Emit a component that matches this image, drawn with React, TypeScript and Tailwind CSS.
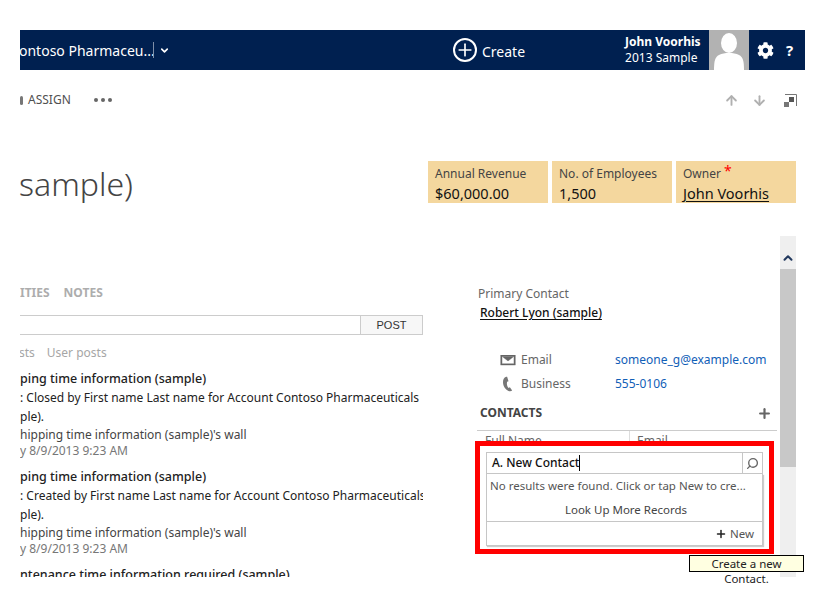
import { ArrowDown, ArrowUp, ChevronDown, ChevronUp, Plus, Search } from "lucide-react";
import { FaCog } from "react-icons/fa";

function Tile({ label, value, link, required }: { label: string; value: string; link?: boolean; required?: boolean }) {
  return (
    <div className="h-[42px] w-[120px] bg-[#f4d79e] pl-[7px] pt-[4px]">
      <div className="flex h-[16px] items-start text-[12px] leading-[18px] text-[#444444]">
        {label}
        {required && <span className="ml-[3px] -mt-[3px] text-[14px] text-[#ff0000]">*</span>}
      </div>
      <div className={`mt-[2px] text-[14.5px] leading-[20px] text-[#111111] ${link ? "underline underline-offset-2" : ""}`}>{value}</div>
    </div>
  );
}

function FeedItem({ title, lines, date }: { title: string; lines: string[]; date: string }) {
  return (
    <div className="h-[98px]">
      <div className="h-[18px] text-[12.5px] font-medium leading-[18px] text-[#222222]">{title}</div>
      <div className="h-[19px] text-[12px] leading-[19px] text-[#222222]">{lines[0]}</div>
      <div className="h-[19px] text-[12px] leading-[19px] text-[#222222]">{lines[1]}</div>
      <div className="h-[17px] text-[12px] leading-[17px] text-[#444444]">{lines[2]}</div>
      <div className="h-[15px] text-[12px] leading-[15px] text-[#777777]">{date}</div>
    </div>
  );
}

export default function App() {
  return (
    <div className="relative h-[608px] w-[825px] overflow-hidden bg-white px-[20px] pt-[30px] font-['Noto_Sans','Open_Sans',sans-serif]">
      {/* nav bar */}
      <div className="flex h-[40px] items-center bg-[#002050] text-white">
        <div className="w-[133px] overflow-hidden whitespace-nowrap">
          <span className="-ml-[1px] block text-[14px]">ontoso Pharmaceu...</span>
        </div>
        <div className="h-[16px] w-px bg-[#7f8fa8]" />
        <ChevronDown className="ml-[5px] h-[11px] w-[11px]" strokeWidth={3.5} />
        <div className="ml-[283px] flex h-[24px] w-[24px] items-center justify-center rounded-full border-2 border-white">
          <Plus className="h-[20px] w-[20px]" strokeWidth={2} />
        </div>
        <span className="ml-[5px] mt-[3px] text-[14px]">Create</span>
        <div className="ml-[100px] w-[84px] text-[12px] leading-[16px]">
          <div className="font-bold">John Voorhis</div>
          <div>2013 Sample</div>
        </div>
        <div className="h-[40px] w-[40px] bg-[#b2b2b2]">
          <svg viewBox="0 0 40 40" className="h-[40px] w-[40px]">
            <ellipse cx="20" cy="13" rx="8" ry="10" fill="#fff" />
            <path d="M5 40c0-9 1-13 5-15 3-1.500 6-2 10-2s7 .5 10 2c4 2 5 6 5 15z" fill="#fff" />
          </svg>
        </div>
        <FaCog className="ml-[8px] h-[17px] w-[17px]" />
        <span className="ml-[12px] text-[15px] font-bold">?</span>
      </div>

      {/* command row */}
      <div className="flex h-[60px] items-center text-[#505050]">
        <div className="h-[9px] w-[3px] rounded-sm bg-[#777777]" />
        <span className="ml-[5px] text-[12px]">ASSIGN</span>
        <div className="ml-[23px] flex gap-[3px]">
          <div className="h-[4px] w-[4px] rounded-full bg-[#666666]" />
          <div className="h-[4px] w-[4px] rounded-full bg-[#666666]" />
          <div className="h-[4px] w-[4px] rounded-full bg-[#666666]" />
        </div>
        <ArrowUp className="ml-auto h-[15px] w-[15px] text-[#b0b0b0]" strokeWidth={3} />
        <ArrowDown className="ml-[13px] h-[15px] w-[15px] text-[#b0b0b0]" strokeWidth={3} />
        <svg viewBox="0 0 13 13" className="ml-[17px] mr-[8px] h-[13px] w-[13px]">
          <path d="M1 .5h11.500V12" fill="none" stroke="#777" />
          <rect x="5" y="3" width="5" height="5" fill="#555" />
          <rect x="0" y="8" width="5" height="5" fill="#777" />
        </svg>
      </div>

      {/* title row */}
      <div className="flex h-[106px] items-start justify-between pt-[31px]">
        <div className="-ml-[1px] mt-[1px] text-[32px] font-light leading-[44px] text-[#444444]">sample)</div>
        <div className="flex gap-[4px] pr-[9px]">
          <Tile label="Annual Revenue" value="$60,000.00" />
          <Tile label="No. of Employees" value="1,500" />
          <Tile label="Owner" value="John Voorhis" link required />
        </div>
      </div>

      {/* body */}
      <div className="flex h-[341px]">
        <div className="w-[403px] overflow-hidden whitespace-nowrap pt-[49px]">
          <div className="flex h-[16px] text-[12px] font-bold leading-[16px] text-[#adadad]">
            <span>ITIES</span>
            <span className="ml-[14px]">NOTES</span>
          </div>
          <div className="mt-[14px] flex h-[20px] border-y border-r border-[#cccccc]">
            <div className="flex-1" />
            <div className="flex w-[62px] items-center justify-center border-l border-[#cccccc] bg-[#f7f7f7] font-['Liberation_Sans',sans-serif] text-[11px] text-[#333333]">POST</div>
          </div>
          <div className="mt-[10px] flex h-[16px] text-[12px] leading-[16px] text-[#a6a6a6]">
            <span className="-ml-[1px]">sts</span>
            <span className="ml-[12px]">User posts</span>
          </div>
          <div className="mt-[9px]">
            <FeedItem title="ping time information (sample)" lines={[": Closed by First name Last name for Account Contoso Pharmaceuticals", "ple).", "hipping time information (sample)'s wall"]} date="y 8/9/2013 9:23 AM" />
            <FeedItem title="ping time information (sample)" lines={[": Created by First name Last name for Account Contoso Pharmaceuticals", "ple).", "hipping time information (sample)'s wall"]} date="y 8/9/2013 9:23 AM" />
            <div className="h-[18px] text-[12.5px] font-medium leading-[18px] text-[#222222]">ntenance time information required (sample)</div>
          </div>
        </div>

        <div className="ml-[54px] w-[300px] pt-[50px]">
          <div className="ml-[1px] text-[12px] leading-[16px] text-[#666666]">Primary Contact</div>
          <div className="ml-[3px] mt-[3px] text-[12px] font-medium leading-[16px] text-[#111111] underline underline-offset-2">Robert Lyon (sample)</div>
          <div className="mt-[27px] flex h-[24px] items-center text-[12px]">
            <svg viewBox="0 0 16 12" className="ml-[23px] h-[11px] w-[16px]">
              <path d="M0 0h16v11H0zM1.500 1.500v8h13v-8zM2 2l6 4.500L14 2" fill="#666" fillRule="evenodd" stroke="#666" strokeWidth=".4" />
            </svg>
            <span className="ml-[5px] w-[94px] text-[#666666]">Email</span>
            <span className="text-[#1160b7]">someone_g@example.com</span>
          </div>
          <div className="flex h-[24px] items-center text-[12px]">
            <svg viewBox="0 0 12 16" className="ml-[26px] h-[16px] w-[11px]">
              <path d="M3.500 0C1 1 0 3 0 6c0 4 2.500 8 6 9.500 1.500.6 3 .5 4-.5l-2.500-3.500-1.500.8C4.500 11 3.800 8 4.500 5.500L6 5 4.500 0z" fill="#777" />
            </svg>
            <span className="ml-[7px] w-[94px] text-[#666666]">Business</span>
            <span className="text-[#1160b7]">555-0106</span>
          </div>
          <div className="ml-[3px] mt-[7px] flex h-[20px] items-center justify-between">
            <span className="text-[12px] font-bold text-[#444444]">CONTACTS</span>
            <Plus className="mr-[5px] h-[15px] w-[15px] text-[#666666]" strokeWidth={3.5} />
          </div>
          <div className="mt-[7px] flex h-[20px] border-t border-[#cccccc] text-[12px] text-[#666666]">
            <div className="w-[153px] border-r border-[#dddddd] pl-[8px] pt-[1px]">Full Name</div>
            <div className="pl-[7px] pt-[1px]">Email</div>
          </div>
        </div>

        <div className="ml-[3px] w-[16px] bg-[#efefef]">
          <div className="flex h-[33px] items-center justify-center">
            <ChevronUp className="mt-[11px] h-[14px] w-[14px] text-[#22395e]" strokeWidth={3.5} />
          </div>
          <div className="h-[198px] bg-[#c8c8c8]" />
        </div>
      </div>

      {/* highlighted lookup, drawn over the grid */}
      <div className="absolute left-[475px] top-[441px] h-[113px] w-[299px] border-[5px] border-[#ff0000] bg-white px-[6px] pt-[6px]">
        <div className="flex h-[22px] items-center border border-[#c6c6c6] pl-[5px] text-[12px] font-medium text-[#111111]">
          <span>A. New Contact</span>
          <span className="h-[16px] w-px bg-black" />
          <div className="ml-auto flex h-full w-[20px] items-center justify-center border-l border-[#c6c6c6]">
            <Search className="h-[13px] w-[13px] -scale-x-100 text-[#666666]" strokeWidth={2.5} />
          </div>
        </div>
        <div className="h-[72px] border-x border-b border-[#c6c6c6] text-[11.5px] text-[#555555] shadow-[1px_1px_1px_#cccccc]">
          <div className="h-[47px] pl-[3px] pt-[3px]">
            <div className="h-[18px] leading-[18px]">No results were found. Click or tap New to cre...</div>
            <div className="mt-[7px] text-center leading-[16px] text-[#444444]">Look Up More Records</div>
          </div>
          <div className="flex h-[24px] items-center justify-end border-t border-[#c6c6c6] pr-[8px]">
            <Plus className="mr-[3px] h-[12px] w-[12px] text-[#222222]" strokeWidth={3} />
            <span>New</span>
          </div>
        </div>
      </div>

      {/* tooltip */}
      <div className="absolute left-[689px] top-[555px] h-[17px] w-[115px] border border-black bg-[#ffffe1] text-center text-[11.5px] leading-[15px] text-[#222222]">Create a new Contact.</div>
    </div>
  );
}
